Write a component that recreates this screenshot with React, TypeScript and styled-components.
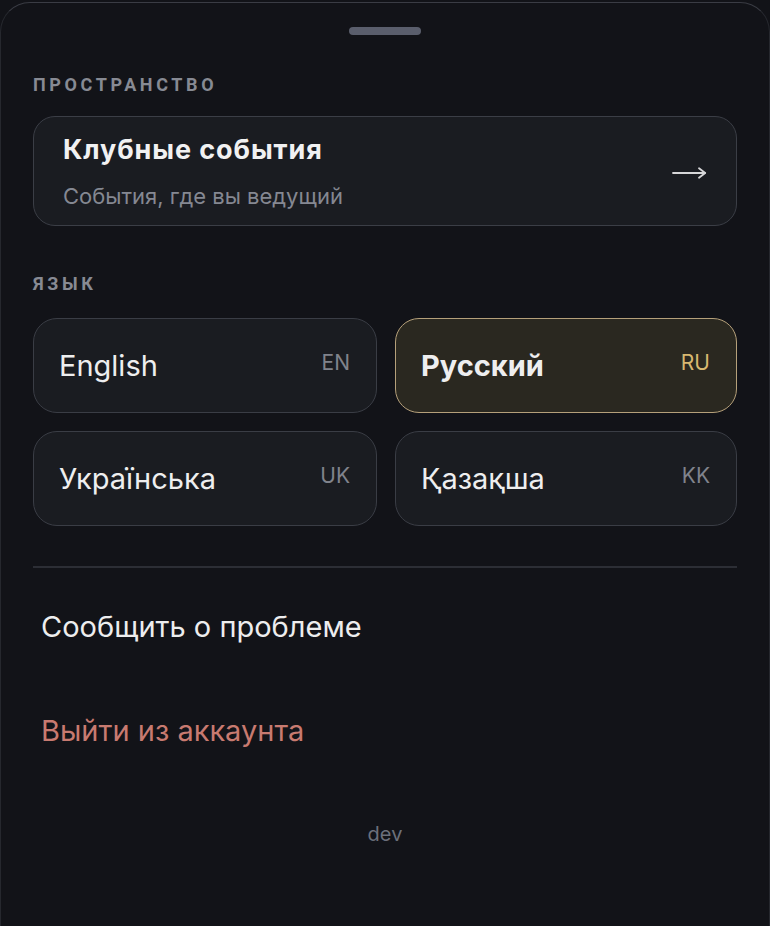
import React from "react";
import styled, { createGlobalStyle, css } from "styled-components";

const Global = createGlobalStyle`
  html, body { margin: 0; padding: 0; background: #121318; }
  body { font-family: Inter, "Noto Sans", sans-serif; -webkit-font-smoothing: antialiased; }
  #root { min-height: 926px; }
`;

const Sheet = styled.div`
  box-sizing: border-box;
  width: 770px;
  height: 926px;
  margin-top: 2px;
  background: #121318;
  border-top: 1.5px solid #3a3c44;
  border-left: 1.5px solid #26282e;
  border-right: 1.5px solid #26282e;
  border-radius: 30px 30px 0 0;
  padding: 0 32px 0 32px;
  display: flex;
  flex-direction: column;
`;

const Handle = styled.div`
  align-self: center;
  width: 72px;
  height: 8px;
  border-radius: 4px;
  background: #5a5e6c;
  margin-top: 24px;
`;

const SectionLabel = styled.div<{ $top: number }>`
  margin-top: ${(p) => p.$top}px;
  font-family: Roboto, Inter, sans-serif;
  font-size: 18px;
  font-weight: 700;
  letter-spacing: 3.6px;
  color: #878a93;
  line-height: 20px;
`;

const SpaceCard = styled.div`
  margin-top: 21px;
  height: 110px;
  box-sizing: border-box;
  border: 1.5px solid #3b3e46;
  border-radius: 22px;
  background: #1a1c21;
  display: flex;
  align-items: center;
  padding: 0 29px 0 29px;
`;

const SpaceText = styled.div`
  flex: 1;
  display: flex;
  flex-direction: column;
  gap: 18px;
`;

const SpaceTitle = styled.div`
  font-size: 27px;
  font-weight: 700;
  letter-spacing: 0.9px;
  color: #f1f1f2;
  line-height: 30px;
  margin-top: 2px;
`;

const SpaceSub = styled.div`
  font-size: 22px;
  color: #858892;
  line-height: 26px;
`;

const ArrowIcon = styled.svg`
  display: block;
  margin-top: 4px;
`;

const LangGrid = styled.div`
  margin-top: 24px;
  display: grid;
  grid-template-columns: 344px 342px;
  gap: 18px 18px;
`;

const LangButton = styled.div<{ $active?: boolean }>`
  height: 95px;
  box-sizing: border-box;
  border-radius: 24px;
  border: 1.5px solid #3a3d45;
  background: #1a1c21;
  display: flex;
  align-items: center;
  justify-content: space-between;
  padding: 0 26px 0 25px;
  ${(p) =>
    p.$active &&
    css`
      border-color: #b5a07a;
      background: #2a2820;
    `}
`;

const LangName = styled.span<{ $active?: boolean }>`
  font-size: 29px;
  color: #eeeeef;
  font-weight: ${(p) => (p.$active ? 700 : 400)};
`;

const LangCode = styled.span<{ $active?: boolean }>`
  font-size: 21px;
  color: ${(p) => (p.$active ? "#d8b870" : "#80838c")};
  margin-top: -6px;
`;

const Divider = styled.div`
  margin-top: 40px;
  height: 2px;
  background: #2c2e35;
`;

const MenuItem = styled.div<{ $danger?: boolean; $top: number }>`
  margin-top: ${(p) => p.$top}px;
  padding-left: 8px;
  font-size: 29px;
  line-height: 34px;
  color: ${(p) => (p.$danger ? "#c87a70" : "#ededee")};
`;

const Footer = styled.div`
  margin-top: 74px;
  text-align: center;
  font-size: 20px;
  color: #6c707b;
  line-height: 24px;
`;

const langs = [
  { name: "English", code: "EN" },
  { name: "Русский", code: "RU", active: true },
  { name: "Українська", code: "UK" },
  { name: "Қазақша", code: "KK" },
];

export default function App() {
  return (
    <>
      <Global />
      <Sheet>
        <Handle />
        <SectionLabel $top={40}>ПРОСТРАНСТВО</SectionLabel>
        <SpaceCard>
          <SpaceText>
            <SpaceTitle>Клубные события</SpaceTitle>
            <SpaceSub>События, где вы ведущий</SpaceSub>
          </SpaceText>
          <ArrowIcon width="35" height="14" viewBox="0 0 35 14" fill="none">
            <path d="M1 7H33" stroke="#d6d6d8" strokeWidth="1.8" strokeLinecap="round" />
            <path d="M27 2.2L33.2 7L27 11.8" stroke="#d6d6d8" strokeWidth="1.8" strokeLinecap="round" strokeLinejoin="round" />
          </ArrowIcon>
        </SpaceCard>
        <SectionLabel $top={48}>ЯЗЫК</SectionLabel>
        <LangGrid>
          {langs.map((l) => (
            <LangButton key={l.code} $active={l.active}>
              <LangName $active={l.active}>{l.name}</LangName>
              <LangCode $active={l.active}>{l.code}</LangCode>
            </LangButton>
          ))}
        </LangGrid>
        <Divider />
        <MenuItem $top={42}>Сообщить о проблеме</MenuItem>
        <MenuItem $top={70} $danger>
          Выйти из аккаунта
        </MenuItem>
        <Footer>dev</Footer>
      </Sheet>
    </>
  );
}
